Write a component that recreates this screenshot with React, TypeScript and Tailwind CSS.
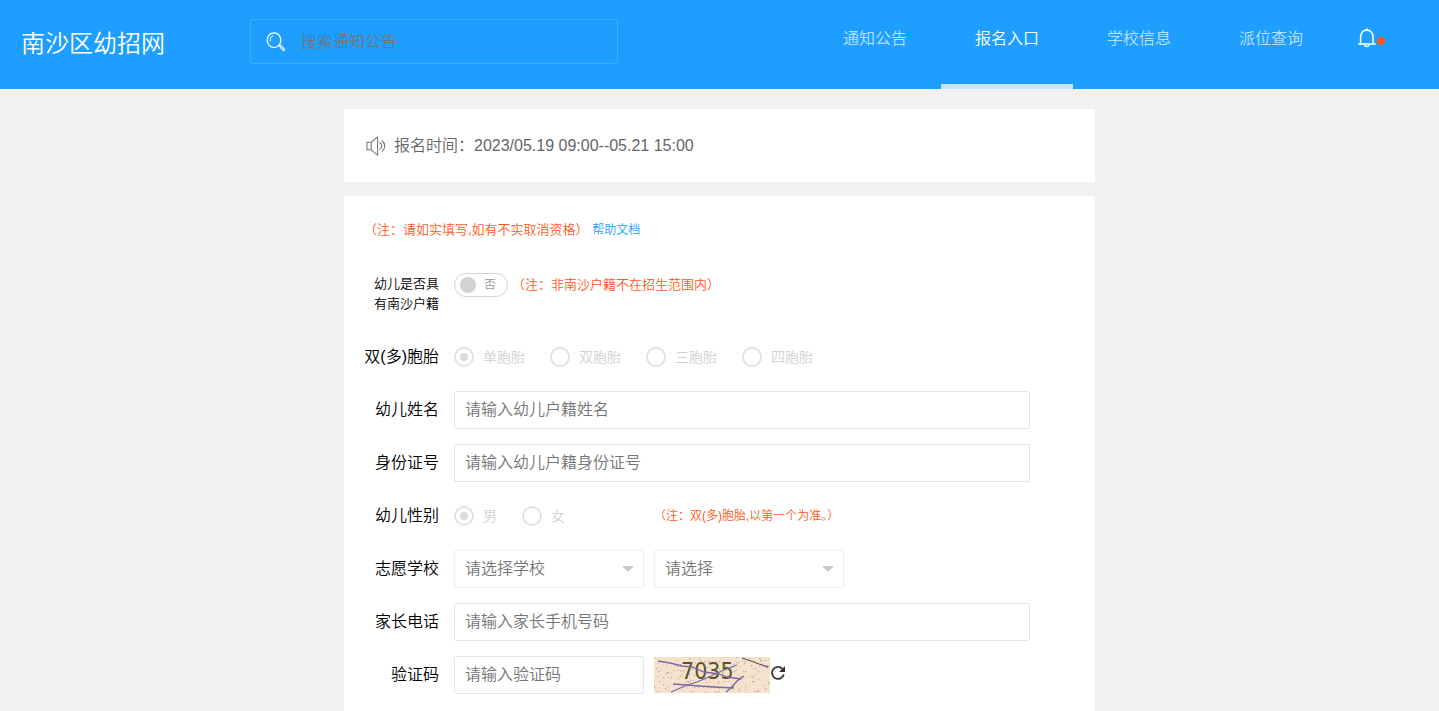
import React, { useState } from 'react'

const navItems = ['通知公告', '报名入口', '学校信息', '派位查询']

const SearchIcon = () => (
  <svg width="20" height="20" viewBox="0 0 20 20" fill="none" stroke="#fff" strokeLinecap="round">
    <ellipse cx="8" cy="8.2" rx="6.8" ry="7.4" strokeWidth="1.3" />
    <path d="M4.2 9.2a4.2 4.8 0 0 1 2.6-5.4" strokeWidth="1" />
    <path d="M13.6 13.8l1.2-.8 3.6 4.2c.5.7-.6 1.7-1.3 1.1l-3.6-4.2z" strokeWidth="1.1" strokeLinejoin="round" />
  </svg>
)

const BellIcon = () => (
  <svg width="20" height="20" viewBox="0 0 20 20" fill="none" stroke="#fff" strokeWidth="1.5" strokeLinecap="round">
    <path d="M3.6 15.8V8.6a6.2 6.6 0 0 1 12.4 0v7.2" />
    <path d="M1.6 15.9h16.6M9.8 1v1" />
    <path d="M7.6 17.2a2.3 1.8 0 0 0 4.4 0" />
  </svg>
)

const SpeakerIcon = () => (
  <svg width="20" height="20" viewBox="0 0 20 20" fill="none" stroke="#777" strokeWidth="1.1" strokeLinejoin="round">
    <path d="M1 6.2h4.2L11.6.8v18.4l-6.4-5.4H1z" />
    <path d="M5.2 6.2v7.6" />
    <path d="M14 6.8a3.8 3.8 0 0 1 0 6.4M16.2 4.8a6.6 6.6 0 0 1 0 10.4" strokeLinecap="round" />
  </svg>
)

const RefreshIcon = () => (
  <svg width="16" height="16" viewBox="0 0 16 16" fill="none">
    <path d="M12.6 4A6 6 0 1 0 13.8 9.4" stroke="#333" strokeWidth="1.8" />
    <path d="M15 1v6H9z" fill="#333" />
  </svg>
)

// speckles behind the captcha digits
const dots = Array.from({ length: 150 }, (_, i) => ({
  x: (i * 47 + ((i * i * 7) % 31)) % 116,
  y: (i * 23 + ((i * i * 5) % 17)) % 36,
  fill: ['#c4b3a6', '#b3aabb', '#cfba9a', '#b0aca0'][i % 4],
}))

const Captcha = () => (
  <svg width="116" height="36" viewBox="0 0 116 36" role="img" aria-label="验证码图片">
    <rect width="116" height="36" fill="#f5e2cd" />
    {dots.map((d, i) => (
      <rect key={i} x={d.x} y={d.y} width="1.2" height="1.2" fill={d.fill} />
    ))}
    <text x="27" y="22" fontSize="23" fontFamily="'DejaVu Sans Condensed', 'DejaVu Sans', sans-serif" fill="#5a5426">
      7035
    </text>
    <g fill="none" stroke="#7a68a0" strokeWidth="1.3">
      <path d="M4 4l12 2 12 3 10 1 12 5 15 2 8 3 14 2" />
      <path d="M17 35l14-6 12-4 14-6 13-6 13-5" />
      <path d="M19 27l26 2 15 1 20 1" />
      <path d="M72 35l6-5 5-6 7-5" />
    </g>
    <path d="M88 1l9 3 8 3 9 3" fill="none" stroke="#5d5664" strokeWidth="1.3" />
  </svg>
)

const inputClass =
  'h-[38px] rounded-xs border border-[#e6e6e6] bg-white px-2.5 text-base text-[#333] outline-none placeholder:text-[#757575]'

const Row = ({ label, htmlFor, children }: { label: string; htmlFor?: string; children: React.ReactNode }) => (
  <div className="flex items-center">
    <label htmlFor={htmlFor} className="w-[110px] shrink-0 pr-[15px] text-right text-black">
      {label}
    </label>
    {children}
  </div>
)

const Radios = ({ name, options }: { name: string; options: string[] }) => (
  <div className="flex h-[38px] gap-[25px]">
    {options.map((option, i) => (
      <label key={option} className="flex items-center gap-[9px] text-sm whitespace-nowrap text-[#d2d2d2]">
        <input
          type="radio"
          name={name}
          disabled
          defaultChecked={i === 0}
          className="grid h-5 w-5 appearance-none place-items-center rounded-full border-2 border-[#e2e2e2] before:h-2 before:w-2 before:rounded-full checked:before:bg-[#dadada]"
        />
        {option}
      </label>
    ))}
  </div>
)

const Select = ({ id, label, placeholder }: { id: string; label: string; placeholder: string }) => (
  <div className="relative w-[190px]">
    <select
      id={id}
      aria-label={label}
      className="h-[38px] w-full appearance-none rounded-xs border border-[#eee] bg-white px-2.5 text-[#757575] outline-none"
    >
      <option>{placeholder}</option>
    </select>
    <span className="pointer-events-none absolute top-4 right-2.5 border-x-6 border-t-6 border-x-transparent border-t-[#c9c9c9]" />
  </div>
)

const Header = () => {
  const [active, setActive] = useState('报名入口')

  return (
    <header className="flex h-[89px] items-start bg-[#1e9fff] pl-[21px]">
      <h1 className="shrink-0 pt-7 text-2xl text-white">南沙区幼招网</h1>
      <div className="mt-[19px] ml-[85px] flex h-[45px] w-[368px] items-center gap-[15px] rounded-xs border border-[#3eadff] px-[15px]">
        <SearchIcon />
        <input
          type="text"
          aria-label="搜索通知公告"
          placeholder="搜索通知公告"
          className="min-w-0 flex-1 bg-transparent text-white outline-none placeholder:text-[#757575]"
        />
      </div>
      <nav className="ml-auto flex h-full">
        {navItems.map((item) => (
          <a
            key={item}
            href="#"
            onClick={() => setActive(item)}
            className={
              item === active
                ? 'flex w-[132px] justify-center border-b-5 border-[#c8e4fb] pt-[27px] text-white'
                : 'flex w-[132px] justify-center pt-[27px] text-white/70'
            }
          >
            {item}
          </a>
        ))}
      </nav>
      <div className="flex h-full w-[102px] items-start pt-7 pl-5">
        <button type="button" aria-label="消息" className="flex items-center">
          <BellIcon />
          <span className="mt-1.5 h-2 w-2 rounded-full bg-[#ff5722]" />
        </button>
      </div>
    </header>
  )
}

const App = () => {
  const [local, setLocal] = useState(false)

  return (
    <div className="min-h-screen bg-[#f1f1f1] font-['Liberation_Sans','Noto_Sans_CJK_SC',sans-serif] text-base font-[350]">
      <Header />
      <main className="mx-auto flex max-w-[751px] flex-col gap-3.5 pt-5">
        <section className="flex h-[73px] items-center gap-2 bg-white px-[22px] text-[#666]">
          <SpeakerIcon />
          <p>报名时间：2023/05.19 09:00--05.21 15:00</p>
        </section>

        <form className="flex flex-col gap-[15px] bg-white pt-6 pb-10">
          <p className="mb-2.5 px-5 text-[13px] leading-5 text-[#ff5722]">
            （注：请如实填写,如有不实取消资格）{' '}
            <a href="#" className="text-xs text-[#1e9fff]">
              帮助文档
            </a>
          </p>

          <div className="flex">
            <label htmlFor="local" className="w-[110px] shrink-0 py-[9px] pr-[15px] pl-[30px] text-right text-[13px] leading-5 text-black">
              幼儿是否具有南沙户籍
            </label>
            <label className="mt-2 flex h-6 w-[54px] items-center gap-2 rounded-full border border-[#d2d2d2] px-[5px] text-xs text-[#999]">
              <input
                id="local"
                type="checkbox"
                checked={local}
                onChange={(e) => setLocal(e.target.checked)}
                className="h-4 w-4 appearance-none rounded-full bg-[#d2d2d2] checked:order-last checked:bg-[#1e9fff]"
              />
              {local ? '是' : '否'}
            </label>
            <span className="mt-2.5 ml-1 text-[13px] leading-5 text-[#ff5722]">（注：非南沙户籍不在招生范围内）</span>
          </div>

          <Row label="双(多)胞胎">
            <Radios name="twins" options={['单胞胎', '双胞胎', '三胞胎', '四胞胎']} />
          </Row>

          <Row label="幼儿姓名" htmlFor="name">
            <input id="name" type="text" placeholder="请输入幼儿户籍姓名" className={`${inputClass} mr-[65px] flex-1`} />
          </Row>

          <Row label="身份证号" htmlFor="idcard">
            <input id="idcard" type="text" placeholder="请输入幼儿户籍身份证号" className={`${inputClass} mr-[65px] flex-1`} />
          </Row>

          <Row label="幼儿性别">
            <div className="mr-2.5 w-[190px]">
              <Radios name="gender" options={['男', '女']} />
            </div>
            <span className="text-xs text-[#ff5722]">（注：双(多)胞胎,以第一个为准。）</span>
          </Row>

          <Row label="志愿学校" htmlFor="school">
            <div className="flex gap-2.5">
              <Select id="school" label="志愿学校" placeholder="请选择学校" />
              <Select id="grade" label="班级" placeholder="请选择" />
            </div>
          </Row>

          <Row label="家长电话" htmlFor="phone">
            <input id="phone" type="tel" placeholder="请输入家长手机号码" className={`${inputClass} mr-[65px] flex-1`} />
          </Row>

          <Row label="验证码" htmlFor="code">
            <input id="code" type="text" placeholder="请输入验证码" className={`${inputClass} mr-2.5 w-[190px]`} />
            <Captcha />
            <button type="button" aria-label="刷新验证码" className="pb-1">
              <RefreshIcon />
            </button>
          </Row>
        </form>
      </main>
    </div>
  )
}

export default App
